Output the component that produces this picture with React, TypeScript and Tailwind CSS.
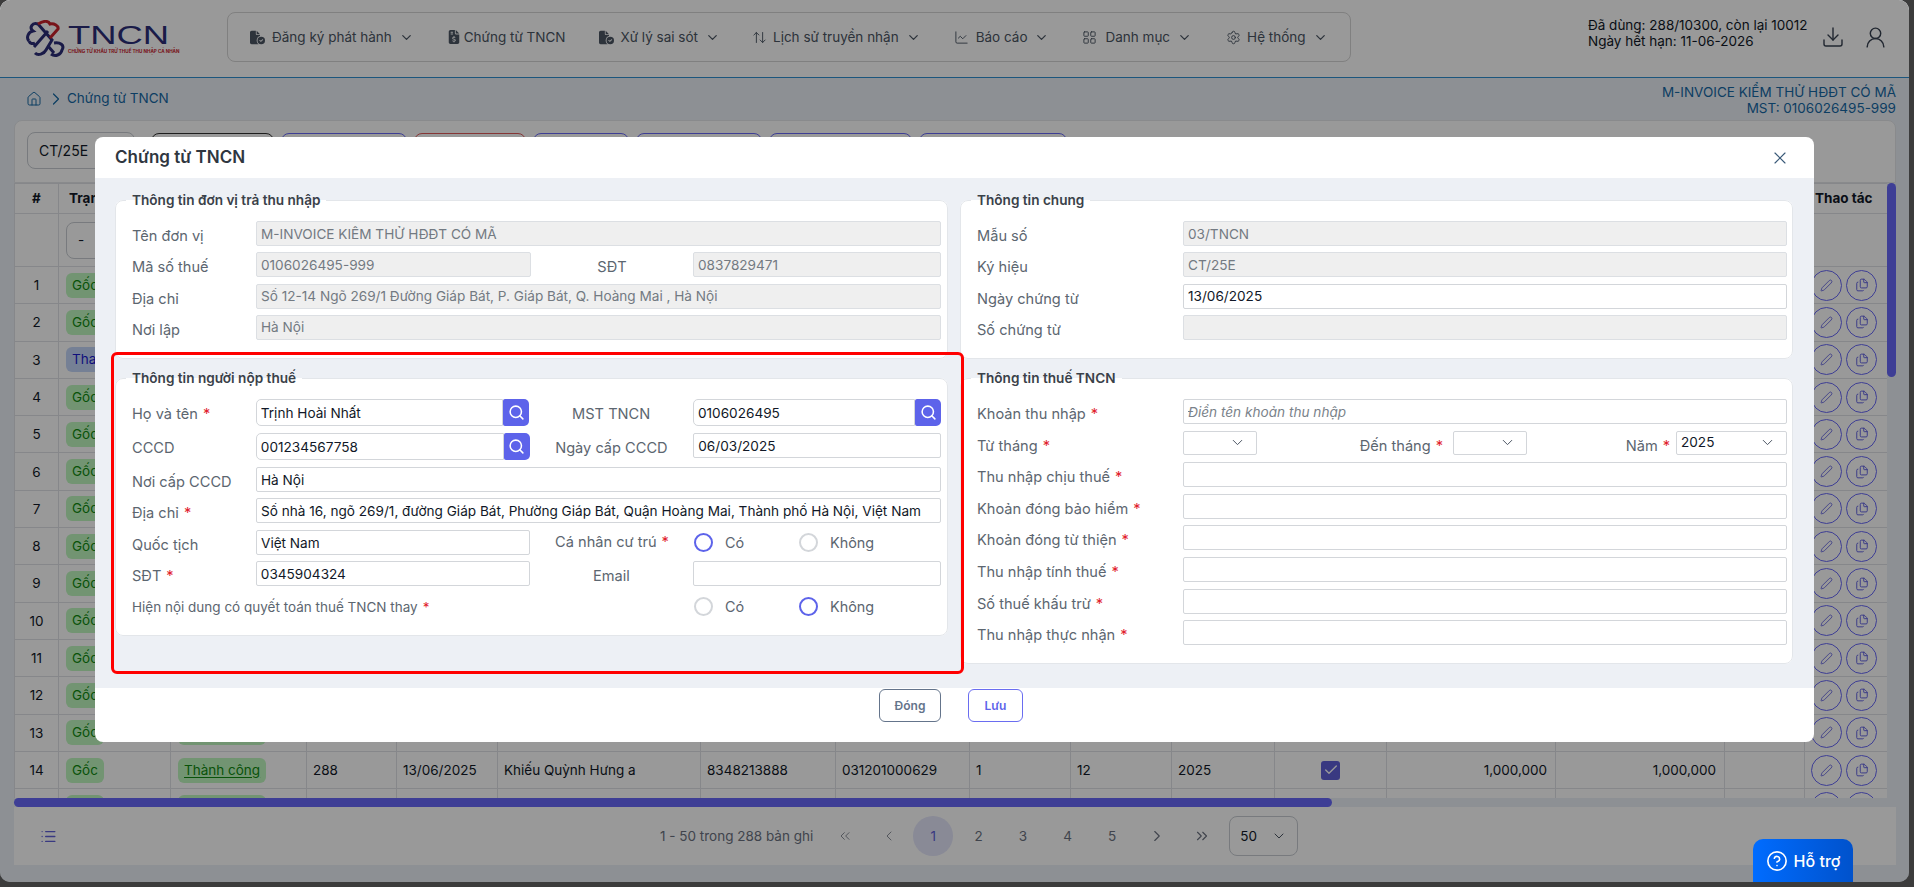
import { ArrowUpDown, ChartLine, ChevronDown, ChevronLeft, ChevronRight, ChevronsLeft, ChevronsRight, CircleHelp, Check, Download, Files, House, LayoutGrid, List, Pen, Search, Settings, UserRound, X } from 'lucide-react';
import { FaFileCircleCheck, FaFileInvoiceDollar } from 'react-icons/fa6';
import type { ReactNode } from 'react';

const navItems = [
    { icon: <FaFileCircleCheck size={15} />, iconBox: 'w-[22px]', label: 'Đăng ký phát hành', menu: true, gap: 'mr-[33px]' },
    { icon: <FaFileInvoiceDollar size={14} />, iconBox: 'w-[17px]', label: 'Chứng từ TNCN', menu: false, gap: 'mr-[33px]' },
    { icon: <FaFileCircleCheck size={15} />, iconBox: 'w-[22px]', label: 'Xử lý sai sót', menu: true, gap: 'mr-[32px]' },
    { icon: <ArrowUpDown size={15} strokeWidth={1.5} />, iconBox: 'w-[21px]', label: 'Lịch sử truyền nhận', menu: true, gap: 'mr-[33px]' },
    { icon: <ChartLine size={15} strokeWidth={1.5} />, iconBox: 'w-[22px]', label: 'Báo cáo', menu: true, gap: 'mr-[33px]' },
    { icon: <LayoutGrid size={15} strokeWidth={1.5} />, iconBox: 'w-[23px]', label: 'Danh mục', menu: true, gap: 'mr-[34px]' },
    { icon: <Settings size={15} strokeWidth={1.5} />, iconBox: 'w-[21px]', label: 'Hệ thống', menu: true, gap: '' },
];

const colWidths = [44, 112, 136, 90, 101, 203, 135, 134, 101, 101, 103, 112, 169, 169, 80, 83];
const headers = ['#', 'Trạng thái', 'Trạng thái CQT', 'Số CT', 'Ngày', 'Họ và tên', 'MST', 'CCCD', 'Từ tháng', 'Đến tháng', 'Năm', 'Cư trú', 'Thu nhập', 'Thực nhận', 'Thuế', 'Thao tác'];
const rowNumbers = Array.from({ length: 15 }, (_, i) => i + 1);

function Logo() {
    return (
        <div className="flex items-center w-[146px] ml-[26px] shrink-0">
            <svg width="40" height="38" viewBox="0 0 40 38" fill="none" className="shrink-0">
                <path d="M12 4 C6 2 3 8 7 11 C2 12 0 18 3 21 M12 4 L26 20 L20 30 C18 34 12 36 9 33" stroke="#2c2e78" strokeWidth="3" />
                <path d="M8 27 L22 11 M3 21 C4 24 7 24 9 23 M28 23 C34 22 39 25 36 30 C35 35 29 37 25 34 M22 26 L28 33" stroke="#2c2e78" strokeWidth="3" />
                <path d="M12 4 C17 1 22 0 24 4 C28 3 33 6 32 9 L24 18" stroke="#c8222c" strokeWidth="3" />
            </svg>
            <div className="ml-[2px] flex flex-col">
                <span className="font-['Liberation_Sans',sans-serif] text-[26px] leading-[22px] text-[#2c2e78] scale-x-[1.4] origin-left">TNCN</span>
                <span className="mt-[3px] text-[4.6px] leading-[5px] font-bold text-[#c8222c] whitespace-nowrap">CHỨNG TỪ KHẤU TRỪ THUẾ THU NHẬP CÁ NHÂN</span>
            </div>
        </div>
    );
}

function Header() {
    return (
        <header className="h-[78px] shrink-0 bg-white border-b border-[#2f8fd0] flex items-center">
            <Logo />
            <nav className="ml-[55px] -mt-[3px] w-[1124px] h-[50px] shrink-0 border border-[#d5d5d5] rounded-lg flex items-center pl-[22px] text-[13.5px] text-[#4b5563] whitespace-nowrap">
                {navItems.map((item) => (
                    <div key={item.label} className={`flex items-center shrink-0 ${item.gap}`}>
                        <span className={`${item.iconBox} flex`}>{item.icon}</span>
                        <span>{item.label}</span>
                        {item.menu && <ChevronDown size={15} className="ml-[7px]" />}
                    </div>
                ))}
            </nav>
            <div className="ml-[237px] -mt-[11px] text-[13.5px] leading-[16px] text-[#111827] whitespace-nowrap">
                <div>Đã dùng: 288/10300, còn lại 10012</div>
                <div>Ngày hết hạn: 11-06-2026</div>
            </div>
            <Download size={24} strokeWidth={1.4} className="absolute left-[1821px] top-[25px] text-[#374151]" />
            <UserRound size={25} strokeWidth={1.4} className="absolute left-[1863px] top-[25px] text-[#374151]" />
        </header>
    );
}

function Breadcrumb() {
    return (
        <div className="h-[42px] shrink-0 flex justify-between pl-[26px] pr-[13px] text-[#1668a5] text-[13.5px]">
            <div className="flex items-center h-[41px]">
                <House size={16} strokeWidth={1.5} />
                <ChevronRight size={20} strokeWidth={1.5} className="ml-[4px] mr-[1px]" />
                <span>Chứng từ TNCN</span>
            </div>
            <div className="text-right leading-[16px] pt-[6px]">
                <div>M-INVOICE KIỂM THỬ HĐĐT CÓ MÃ</div>
                <div>MST: 0106026495-999</div>
            </div>
        </div>
    );
}

function FilterBar() {
    const btns = [
        { w: 'w-[123px]', c: 'border-[#333]' },
        { w: 'w-[126px]', c: 'border-[#6868f8]' },
        { w: 'w-[112px]', c: 'border-[#e05a5a]' },
        { w: 'w-[96px]', c: 'border-[#6868f8]' },
        { w: 'w-[126px]', c: 'border-[#6868f8]' },
        { w: 'w-[143px]', c: 'border-[#6868f8]' },
        { w: 'w-[148px]', c: 'border-[#6868f8]' },
    ];
    return (
        <div className="h-[63px] bg-white border border-[#e4e6ea] rounded-t-lg flex items-start pt-[11px] pl-[12px]">
            <div className="w-[108px] h-[37px] border border-[#c8ccd2] rounded-lg flex items-center pl-[11px] text-[14px] text-[#111827]">CT/25E</div>
            <div className="flex gap-[7px] ml-[16px] mt-[1px]">
                {btns.map((b, i) => (
                    <div key={i} className={`${b.w} ${b.c} h-[36px] border rounded-lg`} />
                ))}
            </div>
        </div>
    );
}

function Badge({ children, tone = 'green', underline = false }: { children: ReactNode; tone?: 'green' | 'blue'; underline?: boolean }) {
    const cls = tone === 'green' ? 'bg-[#bff7bf] text-[#0f8a0f]' : 'bg-[#c4d6f8] text-[#1a1ad0]';
    return <span className={`inline-block px-[6px] h-[25px] leading-[25px] rounded-md whitespace-nowrap ${cls} ${underline ? 'underline underline-offset-2' : ''}`}>{children}</span>;
}

function ActionCell() {
    return (
        <div className="flex gap-[4px] pl-[6px]">
            <span className="w-[31px] h-[31px] rounded-full border border-[#6868f8] text-[#5a5ae0] flex items-center justify-center"><Pen size={13} strokeWidth={1.5} /></span>
            <span className="w-[31px] h-[31px] rounded-full border border-[#6868f8] text-[#5a5ae0] flex items-center justify-center"><Files size={14} strokeWidth={1.6} /></span>
        </div>
    );
}

function DataTable() {
    return (
        <table className="table-fixed border-collapse w-[1873px] text-[13.5px] text-[#111827]">
            <colgroup>
                {colWidths.map((w, i) => <col key={i} style={{ width: w }} />)}
            </colgroup>
            <thead>
                <tr className="h-[30px]">
                    {headers.map((h, i) => (
                        <th key={i} className={`border border-[#dfe2e6] font-bold text-[#111827] whitespace-nowrap overflow-hidden ${i === 0 ? 'text-center' : 'text-left px-[10px]'}`}>{h}</th>
                    ))}
                </tr>
                <tr className="h-[53px]">
                    {headers.map((h, i) => (
                        <td key={i} className="border border-[#dfe2e6] px-[7px]">
                            {i === 1 && <div className="h-[37px] border border-[#c8ccd2] rounded-lg flex items-center pl-[11px]">-</div>}
                        </td>
                    ))}
                </tr>
            </thead>
            <tbody>
                {rowNumbers.map((n) => (
                    <tr key={n} className="h-[37.3px]">
                        <td className="border border-[#dfe2e6] text-center">{n}</td>
                        <td className="border border-[#dfe2e6] px-[7px]">{n === 3 ? <Badge tone="blue">Thay thế</Badge> : <Badge>Gốc</Badge>}</td>
                        <td className="border border-[#dfe2e6] px-[7px]"><Badge underline>Thành công</Badge></td>
                        <td className="border border-[#dfe2e6] px-[6px]">288</td>
                        <td className="border border-[#dfe2e6] px-[6px]">13/06/2025</td>
                        <td className="border border-[#dfe2e6] px-[6px] whitespace-nowrap">Khiếu Quỳnh Hưng a</td>
                        <td className="border border-[#dfe2e6] px-[6px]">8348213888</td>
                        <td className="border border-[#dfe2e6] px-[6px]">031201000629</td>
                        <td className="border border-[#dfe2e6] px-[6px]">1</td>
                        <td className="border border-[#dfe2e6] px-[6px]">12</td>
                        <td className="border border-[#dfe2e6] px-[6px]">2025</td>
                        <td className="border border-[#dfe2e6]">
                            <span className="w-[19px] h-[19px] mx-auto rounded-[3px] bg-[#5f5fd8] text-white flex items-center justify-center"><Check size={16} /></span>
                        </td>
                        <td className="border border-[#dfe2e6] px-[8px] text-right">1,000,000</td>
                        <td className="border border-[#dfe2e6] px-[8px] text-right">1,000,000</td>
                        <td className="border border-[#dfe2e6]" />
                        <td className="border border-[#dfe2e6]"><ActionCell /></td>
                    </tr>
                ))}
            </tbody>
        </table>
    );
}

function Pagination() {
    return (
        <div className="h-[58px] bg-white flex items-center pl-[26px] pr-[16px] relative text-[13.5px] text-[#6b7280]">
            <List size={17} strokeWidth={1.8} className="text-[#5f5fd8]" />
            <span className="ml-[603px] whitespace-nowrap">1 - 50 trong 288 bản ghi</span>
            <div className="flex items-center ml-[24px]">
                <span className="w-[16px] flex justify-center"><ChevronsLeft size={18} strokeWidth={1.5} className="text-[#8a9099]" /></span>
                <span className="ml-[28px] w-[16px] flex justify-center"><ChevronLeft size={18} strokeWidth={1.5} className="text-[#8a9099]" /></span>
                <span className="ml-[16px] mr-[3px] w-[40px] h-[40px] rounded-full bg-[#e4e6fb] text-[#5f5fd8] flex items-center justify-center">1</span>
                {[2, 3, 4, 5].map((p) => (
                    <span key={p} className="w-[44.5px] text-center">{p}</span>
                ))}
                <span className="w-[45px] flex justify-center"><ChevronRight size={18} strokeWidth={1.5} /></span>
                <span className="w-[45px] flex justify-center"><ChevronsRight size={18} strokeWidth={1.5} /></span>
                <div className="ml-[5px] w-[69px] h-[40px] border border-[#c8ccd2] rounded-lg flex items-center justify-between pl-[10px] pr-[10px] text-[#111827]">
                    50 <ChevronDown size={16} strokeWidth={1.5} className="text-[#4b5563]" />
                </div>
            </div>
        </div>
    );
}

function Backdrop() {
    return (
        <div className="h-[882px] bg-[#ebf1f7] flex flex-col">
            <Header />
            <Breadcrumb />
            <div className="mx-[14px] w-[1882px] flex flex-col">
                <FilterBar />
                <div className="flex h-[615px] bg-white">
                    <div className="w-[1873px] overflow-hidden"><DataTable /></div>
                    <div className="w-[9px] bg-[#ebf1f7] relative">
                        <div className="w-[9px] h-[194px] rounded-full bg-[#6868f8]" />
                    </div>
                </div>
                <div className="h-[9px] bg-[#ebf1f7]">
                    <div className="w-[1318px] h-[9px] rounded-full bg-[#6868f8]" />
                </div>
                <Pagination />
            </div>
        </div>
    );
}

const inputBase = 'h-[25px] border rounded-[2px] px-[4px] text-[13.6px] outline-none min-w-0';

function Field({ value, disabled, className = '', placeholder }: { value?: string; disabled?: boolean; className?: string; placeholder?: string }) {
    const tone = disabled ? 'bg-[#efefef] border-[#dcdfe3] text-[#737a82]' : 'bg-white border-[#d3d6da] text-[#111827] placeholder:italic placeholder:text-[#7a828a]';
    return <input readOnly value={value ?? ''} placeholder={placeholder} className={`${inputBase} ${tone} ${className}`} />;
}

function Req() {
    return <span className="text-[#e11d2e] ml-[5px]">*</span>;
}

function Lbl({ children, required, className = '' }: { children: ReactNode; required?: boolean; className?: string }) {
    return <div className={`text-[14.6px] leading-[18px] text-[#5c6670] whitespace-nowrap pt-[6px] ${className}`}>{children}{required && <Req />}</div>;
}

function SearchInput({ value, width }: { value: string; width: string }) {
    return (
        <div className={`flex h-[27px] ${width}`}>
            <input readOnly value={value} className="flex-1 min-w-0 h-[27px] border border-[#d3d6da] rounded-l-[5px] px-[4px] text-[13.6px] text-[#111827] outline-none" />
            <span className="w-[26px] h-[27px] bg-[#5d63ea] rounded-r-[5px] rounded-l-[2px] flex items-center justify-center text-white"><Search size={17} strokeWidth={2.2} /></span>
        </div>
    );
}

function Radio({ on, label, className = '' }: { on?: boolean; label: string; className?: string }) {
    return (
        <div className={`flex items-center ${className}`}>
            <span className={`w-[19px] h-[19px] rounded-full bg-white ${on ? 'border-[2.5px] border-[#5d63ea]' : 'border-2 border-[#d3d6da]'}`} />
            <span className="ml-[12px] text-[14.4px] text-[#5c6670]">{label}</span>
        </div>
    );
}

function Section({ title, className = '', children }: { title: string; className?: string; children: ReactNode }) {
    return (
        <fieldset className={`border border-[#e3e6ea] rounded-lg bg-white min-w-0 ${className}`}>
            <legend className="ml-[10px] px-[6px] leading-[18px] font-semibold text-[#3a4149] text-[13.6px]">{title}</legend>
            {children}
        </fieldset>
    );
}

function Select({ value, width }: { value?: string; width: string }) {
    return (
        <div className={`${width} h-[24px] border border-[#d3d6da] rounded-[2px] flex items-center justify-between pl-[4px] pr-[10px] text-[13.6px] text-[#111827]`}>
            <span>{value}</span>
            <ChevronDown size={17} strokeWidth={1.4} className="text-[#4b5563]" />
        </div>
    );
}

const taxRows = ['Thu nhập chịu thuế', 'Khoản đóng bảo hiểm', 'Khoản đóng từ thiện', 'Thu nhập tính thuế', 'Số thuế khấu trừ', 'Thu nhập thực nhận'];

function PayerSection() {
    return (
        <Section title="Thông tin đơn vị trả thu nhập" className="h-[168px]">
            <div className="pt-[12px] pl-[16px] pr-[6px] flex flex-col gap-[6.3px]">
                <div className="flex h-[25px]"><Lbl className="w-[124px]">Tên đơn vị</Lbl><Field disabled value="M-INVOICE KIỂM THỬ HĐĐT CÓ MÃ" className="flex-1" /></div>
                <div className="flex h-[25px]">
                    <Lbl className="w-[124px]">Mã số thuế</Lbl>
                    <Field disabled value="0106026495-999" className="w-[275px]" />
                    <Lbl className="w-[162px] text-center">SĐT</Lbl>
                    <Field disabled value="0837829471" className="flex-1" />
                </div>
                <div className="flex h-[25px]"><Lbl className="w-[124px]">Địa chỉ</Lbl><Field disabled value="Số 12-14 Ngõ 269/1 Đường Giáp Bát, P. Giáp Bát, Q. Hoàng Mai , Hà Nội" className="flex-1" /></div>
                <div className="flex h-[25px]"><Lbl className="w-[124px]">Nơi lập</Lbl><Field disabled value="Hà Nội" className="flex-1" /></div>
            </div>
        </Section>
    );
}

function TaxpayerSection() {
    return (
        <Section title="Thông tin người nộp thuế" className="h-[267px] mt-[10px]">
            <div className="pt-[12px] pl-[16px] pr-[6px] flex flex-col">
                <div className="flex h-[27px]">
                    <Lbl required className="w-[124px]">Họ và tên</Lbl>
                    <SearchInput value="Trịnh Hoài Nhất" width="w-[274px]" />
                    <Lbl className="w-[164px] text-center">MST TNCN</Lbl>
                    <SearchInput value="0106026495" width="w-[248px]" />
                </div>
                <div className="flex h-[27px] mt-[7px]">
                    <Lbl className="w-[124px]">CCCD</Lbl>
                    <SearchInput value="001234567758" width="w-[274px]" />
                    <Lbl className="w-[164px] text-center">Ngày cấp CCCD</Lbl>
                    <Field value="06/03/2025" className="w-[248px]" />
                </div>
                <div className="flex h-[25px] mt-[7px]">
                    <Lbl className="w-[124px]">Nơi cấp CCCD</Lbl>
                    <Field value="Hà Nội" className="flex-1" />
                </div>
                <div className="flex h-[25px] mt-[6px]">
                    <Lbl required className="w-[124px]">Địa chỉ</Lbl>
                    <Field value="Số nhà 16, ngõ 269/1, đường Giáp Bát, Phường Giáp Bát, Quận Hoàng Mai, Thành phố Hà Nội, Việt Nam" className="flex-1" />
                </div>
                <div className="flex h-[25px] mt-[7px]">
                    <Lbl className="w-[124px]">Quốc tịch</Lbl>
                    <Field value="Việt Nam" className="w-[274px]" />
                    <Lbl required className="w-[164px] text-center !pt-[3px]">Cá nhân cư trú</Lbl>
                    <Radio on label="Có" className="w-[105px]" />
                    <Radio label="Không" />
                </div>
                <div className="flex h-[25px] mt-[6px]">
                    <Lbl required className="w-[124px]">SĐT</Lbl>
                    <Field value="0345904324" className="w-[274px]" />
                    <Lbl className="w-[164px] text-center">Email</Lbl>
                    <Field className="w-[248px]" />
                </div>
                <div className="flex h-[25px] mt-[8px]">
                    <div className="w-[562px] text-[13.5px] leading-[18px] text-[#5c6670] whitespace-nowrap pt-[4px]">Hiện nội dung có quyết toán thuế TNCN thay<Req /></div>
                    <Radio label="Có" className="w-[105px]" />
                    <Radio on label="Không" />
                </div>
            </div>
        </Section>
    );
}

function GeneralSection() {
    return (
        <Section title="Thông tin chung" className="h-[168px]">
            <div className="pt-[12px] pl-[16px] pr-[5px] flex flex-col gap-[6.3px]">
                <div className="flex h-[25px]"><Lbl className="w-[206px]">Mẫu số</Lbl><Field disabled value="03/TNCN" className="flex-1" /></div>
                <div className="flex h-[25px]"><Lbl className="w-[206px]">Ký hiệu</Lbl><Field disabled value="CT/25E" className="flex-1" /></div>
                <div className="flex h-[25px]"><Lbl className="w-[206px]">Ngày chứng từ</Lbl><Field value="13/06/2025" className="flex-1" /></div>
                <div className="flex h-[25px]"><Lbl className="w-[206px]">Số chứng từ</Lbl><Field disabled className="flex-1" /></div>
            </div>
        </Section>
    );
}

function TaxSection() {
    return (
        <Section title="Thông tin thuế TNCN" className="h-[295px] mt-[10px]">
            <div className="pt-[12px] pl-[16px] pr-[5px] flex flex-col gap-[6.6px]">
                <div className="flex h-[25px]"><Lbl required className="w-[206px]">Khoản thu nhập</Lbl><Field placeholder="Điền tên khoản thu nhập" className="flex-1" /></div>
                <div className="flex h-[25px]">
                    <Lbl required className="w-[206px]">Từ tháng</Lbl>
                    <Select width="w-[74px]" />
                    <Lbl required className="w-[196px] text-right pr-[10px]">Đến tháng</Lbl>
                    <Select width="w-[74px]" />
                    <Lbl required className="w-[149px] text-right pr-[6px]">Năm</Lbl>
                    <Select value="2025" width="w-[111px]" />
                </div>
                {taxRows.map((r) => (
                    <div key={r} className="flex h-[25px]"><Lbl required className="w-[206px]">{r}</Lbl><Field className="flex-1" /></div>
                ))}
            </div>
        </Section>
    );
}

function Modal() {
    return (
        <div className="absolute left-[95px] top-[137px] w-[1719px] h-[605px] bg-white rounded-lg flex flex-col overflow-hidden">
            <div className="h-[41px] shrink-0 flex items-center justify-between pl-[20px] pr-[24px]">
                <h2 className="text-[17px] font-semibold text-[#2f3640]">Chứng từ TNCN</h2>
                <X size={20} strokeWidth={1.4} className="text-[#3a5a78]" />
            </div>
            <div className="h-[510px] shrink-0 bg-[#edf0f5] pt-[13px] pl-[20px] pr-[21px] grid grid-cols-[833px_833px] gap-x-[12px] items-start">
                <div><PayerSection /><TaxpayerSection /></div>
                <div><GeneralSection /><TaxSection /></div>
            </div>
            <div className="flex-1 flex justify-center items-start gap-[27px] pr-[7px] mt-[1px]">
                <button className="w-[62px] h-[33px] border border-[#64748b] rounded-md text-[12px] font-semibold text-[#64748b]">Đóng</button>
                <button className="w-[55px] h-[33px] border border-[#6a6df0] rounded-md text-[12px] font-semibold text-[#5d63ea]">Lưu</button>
            </div>
            <div className="absolute left-[16px] top-[215px] w-[853px] h-[322px] border-[3px] border-[#ff0000] rounded-md pointer-events-none" />
        </div>
    );
}

export default function App() {
    return (
        <div className="w-[1914px] h-[887px] bg-[#3c3c3c] overflow-hidden font-['Inter',sans-serif]">
            <div className="relative w-[1909px] h-[882px] rounded-[10px] overflow-hidden">
                <Backdrop />
                <div className="absolute inset-0 bg-black/40" />
                <Modal />
                <div className="absolute left-[1753px] top-[839px] w-[100px] h-[43px] rounded-t-[10px] bg-gradient-to-r from-[#006cff] to-[#0052cc] flex items-center justify-center gap-[6px] text-white text-[16px] font-medium">
                    <CircleHelp size={22} strokeWidth={1.8} />
                    <span>Hỗ trợ</span>
                </div>
            </div>
        </div>
    );
}
